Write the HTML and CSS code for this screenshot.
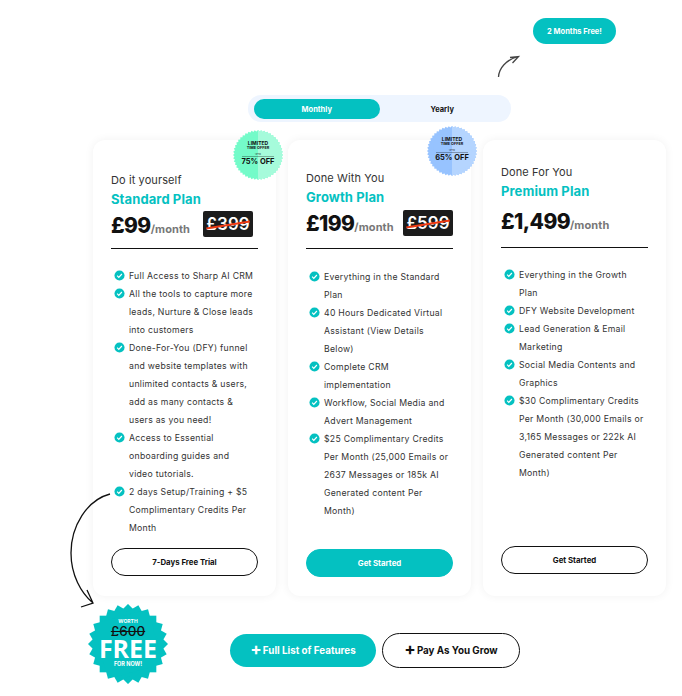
FILE: index.html
```html
<!DOCTYPE html>
<html lang="en">
<head>
    <meta charset="UTF-8">
    <meta name="viewport" content="width=device-width, initial-scale=1.0">
    <title>Pricing Plans</title>
    <link rel="stylesheet" href="styles.css">
</head>
<body>
    <!-- shared shapes -->
    <svg class="defs" width="0" height="0" aria-hidden="true">
        <defs>
            <symbol id="burstFine" viewBox="-50 -50 100 100">
                <rect x="-35.4" y="-35.4" width="70.8" height="70.8"/>
                <rect x="-35.4" y="-35.4" width="70.8" height="70.8" transform="rotate(7.5)"/>
                <rect x="-35.4" y="-35.4" width="70.8" height="70.8" transform="rotate(15)"/>
                <rect x="-35.4" y="-35.4" width="70.8" height="70.8" transform="rotate(22.5)"/>
                <rect x="-35.4" y="-35.4" width="70.8" height="70.8" transform="rotate(30)"/>
                <rect x="-35.4" y="-35.4" width="70.8" height="70.8" transform="rotate(37.5)"/>
                <rect x="-35.4" y="-35.4" width="70.8" height="70.8" transform="rotate(45)"/>
                <rect x="-35.4" y="-35.4" width="70.8" height="70.8" transform="rotate(52.5)"/>
                <rect x="-35.4" y="-35.4" width="70.8" height="70.8" transform="rotate(60)"/>
                <rect x="-35.4" y="-35.4" width="70.8" height="70.8" transform="rotate(67.5)"/>
                <rect x="-35.4" y="-35.4" width="70.8" height="70.8" transform="rotate(75)"/>
                <rect x="-35.4" y="-35.4" width="70.8" height="70.8" transform="rotate(82.5)"/>
            </symbol>
            <symbol id="burstWide" viewBox="-50 -50 100 100">
                <rect x="-35.4" y="-35.4" width="70.8" height="70.8"/>
                <rect x="-35.4" y="-35.4" width="70.8" height="70.8" transform="rotate(15)"/>
                <rect x="-35.4" y="-35.4" width="70.8" height="70.8" transform="rotate(30)"/>
                <rect x="-35.4" y="-35.4" width="70.8" height="70.8" transform="rotate(45)"/>
                <rect x="-35.4" y="-35.4" width="70.8" height="70.8" transform="rotate(60)"/>
                <rect x="-35.4" y="-35.4" width="70.8" height="70.8" transform="rotate(75)"/>
            </symbol>
            <symbol id="check" viewBox="0 0 12 12">
                <circle cx="6" cy="6" r="5.5" fill="#04c1c1"/>
                <path d="M3.4 6.2l1.8 1.8 3.4-3.6" fill="none" stroke="#fff" stroke-width="1.3"/>
            </symbol>
            <clipPath id="rightHalf">
                <rect x="50" y="0" width="50" height="100"/>
            </clipPath>
        </defs>
    </svg>

    <div class="page">
        <div class="promo-row">
            <span class="promo-pill">2 Months Free!</span>
        </div>

        <div class="toggle">
            <button class="toggle-btn toggle-active" type="button">Monthly</button>
            <button class="toggle-btn" type="button">Yearly</button>
        </div>

        <div class="plans">
            <!-- Standard -->
            <section class="plan plan-standard">
                <p class="plan-kicker">Do it yourself</p>
                <h2 class="plan-name">Standard Plan</h2>
                <div class="plan-price">
                    <span class="amount">£99</span><span class="per">/month</span>
                    <span class="old-price">£399</span>
                </div>
                <ul class="features">
                    <li><svg class="tick"><use href="#check"/></svg>Full Access to Sharp AI CRM</li>
                    <li><svg class="tick"><use href="#check"/></svg>All the tools to capture more leads, Nurture &amp; Close leads into customers</li>
                    <li><svg class="tick"><use href="#check"/></svg>Done-For-You (DFY) funnel and website templates with unlimited contacts &amp; users, add as many contacts &amp; users as you need!</li>
                    <li><svg class="tick"><use href="#check"/></svg>Access to Essential onboarding guides and<br>video tutorials.</li>
                    <li><svg class="tick"><use href="#check"/></svg>2 days Setup/Training + $5 Complimentary Credits Per Month</li>
                </ul>
                <a class="plan-btn" href="#">7-Days Free Trial</a>
            </section>

            <!-- Growth -->
            <section class="plan plan-growth">
                <p class="plan-kicker">Done With You</p>
                <h2 class="plan-name">Growth Plan</h2>
                <div class="plan-price">
                    <span class="amount">£199</span><span class="per">/month</span>
                    <span class="old-price">£599</span>
                </div>
                <ul class="features">
                    <li><svg class="tick"><use href="#check"/></svg>Everything in the Standard Plan</li>
                    <li><svg class="tick"><use href="#check"/></svg>40 Hours Dedicated Virtual Assistant (View Details Below)</li>
                    <li><svg class="tick"><use href="#check"/></svg>Complete CRM implementation</li>
                    <li><svg class="tick"><use href="#check"/></svg>Workflow, Social Media and Advert Management</li>
                    <li><svg class="tick"><use href="#check"/></svg>$25 Complimentary Credits Per Month (25,000 Emails or 2637 Messages or 185k AI Generated content Per Month)</li>
                </ul>
                <a class="plan-btn plan-btn-solid" href="#">Get Started</a>
            </section>

            <!-- Premium -->
            <section class="plan plan-premium">
                <p class="plan-kicker">Done For You</p>
                <h2 class="plan-name">Premium Plan</h2>
                <div class="plan-price">
                    <span class="amount">£1,499</span><span class="per">/month</span>
                </div>
                <ul class="features">
                    <li><svg class="tick"><use href="#check"/></svg>Everything in the Growth Plan</li>
                    <li><svg class="tick"><use href="#check"/></svg>DFY Website Development</li>
                    <li><svg class="tick"><use href="#check"/></svg>Lead Generation &amp; Email Marketing</li>
                    <li><svg class="tick"><use href="#check"/></svg>Social Media Contents and Graphics</li>
                    <li><svg class="tick"><use href="#check"/></svg>$30 Complimentary Credits Per Month (30,000 Emails or 3,165 Messages or 222k AI Generated content Per Month)</li>
                </ul>
                <a class="plan-btn" href="#">Get Started</a>
            </section>
        </div>

        <div class="actions">
            <a class="action-btn action-solid" href="#"><span class="plus">+</span>Full List of Features</a>
            <a class="action-btn action-outline" href="#"><span class="plus">+</span>Pay As You Grow</a>
        </div>

        <!-- overlays -->
        <svg class="arrow-up" viewBox="0 0 24 24" width="24" height="24">
            <path d="M1.500 23C2 14 9 6 21 2.500M13 3.500L21.500 2.500L15.500 9" fill="none" stroke="#444" stroke-width="1.300"/>
        </svg>

        <svg class="arrow-down" viewBox="0 0 48 120" width="48" height="120">
            <path d="M41 3C18 9 2 35 2 62C2 84 12 102 24 112M18 99L24 112L12 116" fill="none" stroke="#111" stroke-width="1.300"/>
        </svg>

        <div class="burst burst-green">
            <svg viewBox="0 0 100 100"><use href="#burstFine" width="100" height="100" class="tone-dark"/><g clip-path="url(#rightHalf)"><use href="#burstFine" width="100" height="100" class="tone-light"/></g></svg>
            <div class="burst-text">
                <span class="burst-top">LIMITED</span>
                <span class="burst-sub">TIME OFFER</span>
                <span class="burst-upto">UPTO</span>
                <span class="burst-off">75% OFF</span>
            </div>
        </div>

        <div class="burst burst-blue">
            <svg viewBox="0 0 100 100"><use href="#burstFine" width="100" height="100" class="tone-dark"/><g clip-path="url(#rightHalf)"><use href="#burstFine" width="100" height="100" class="tone-light"/></g></svg>
            <div class="burst-text">
                <span class="burst-top">LIMITED</span>
                <span class="burst-sub">TIME OFFER</span>
                <span class="burst-upto">UPTO</span>
                <span class="burst-off">65% OFF</span>
            </div>
        </div>

        <div class="free-badge">
            <svg viewBox="0 0 100 100"><use href="#burstWide" width="100" height="100"/></svg>
            <div class="free-text">
                <span class="free-worth">WORTH</span>
                <span class="free-old">£600</span>
                <span class="free-main">FREE</span>
                <span class="free-now">FOR NOW!</span>
            </div>
        </div>
    </div>
</body>
</html>
```

FILE: styles.css
```css
* {
    box-sizing: border-box;
}

body {
    font-family: "Inter", "Liberation Sans", sans-serif;
    background-color: #fff;
    color: #111;
    margin: 0;
}

a {
    text-decoration: none;
}

.defs {
    position: absolute;
}

.page {
    position: relative;
    width: 682px;
    height: 696px;
    overflow: hidden;
    padding-top: 18px;
}

/* promo + toggle */
.promo-row {
    display: flex;
    justify-content: flex-end;
    padding-right: 66px;
}

.promo-pill {
    display: flex;
    align-items: center;
    justify-content: center;
    width: 83px;
    height: 26px;
    border-radius: 13px;
    background-color: #04c1c1;
    color: #fff;
    font-size: 7.5px;
    font-weight: 700;
}

.toggle {
    display: flex;
    width: 263px;
    height: 27px;
    margin: 51px 0 0 248px;
    padding: 4px 6px;
    border-radius: 13px;
    background-color: #eef5ff;
}

.toggle-btn {
    width: 126px;
    height: 20px;
    padding: 0;
    border: none;
    border-radius: 10px;
    background: none;
    color: #111;
    font-family: inherit;
    font-size: 7.5px;
    font-weight: 700;
}

.toggle-active {
    background-color: #04c1c1;
    color: #fff;
}

/* plan cards */
.plans {
    display: flex;
    gap: 12px;
    height: 456px;
    margin: 18px 0 0 93px;
}

.plan {
    display: flex;
    flex-direction: column;
    width: 183px;
    padding: 0 18px;
    border-radius: 12px;
    background-color: #fff;
    box-shadow: 0 0 10px rgba(0, 0, 0, 0.06);
}

.plan-standard {
    padding-top: 33px;
    padding-bottom: 20px;
}

.plan-growth {
    padding-top: 31px;
    padding-bottom: 19px;
}

.plan-premium {
    padding-top: 25px;
    padding-bottom: 22px;
}

.plan-kicker {
    margin: 0;
    font-size: 11px;
    line-height: 14px;
    letter-spacing: 0.1px;
    color: #333;
}

.plan-name {
    margin: 5px 0 0;
    font-size: 13px;
    line-height: 14px;
    letter-spacing: 0.1px;
    font-weight: 700;
    color: #04c1c1;
}

.plan-price {
    display: flex;
    align-items: flex-end;
    height: 43px;
    padding-bottom: 10px;
    border-bottom: 1px solid #111;
}

.plan-growth .plan-price {
    height: 45px;
    padding-bottom: 12px;
}

.plan-premium .plan-price {
    height: 50px;
    padding-bottom: 13px;
}

.amount {
    font-size: 21px;
    line-height: 24px;
    letter-spacing: -0.6px;
    font-weight: 800;
    color: #111;
}

.per {
    font-size: 11px;
    line-height: 18px;
    letter-spacing: 0.1px;
    font-weight: 700;
    color: #777;
}

.old-price {
    position: relative;
    display: block;
    width: 50px;
    height: 26px;
    margin: 0 5px 1px auto;
    border-radius: 2px;
    background-color: #1c1c1c;
    color: #fff;
    font-size: 17px;
    line-height: 26px;
    font-weight: 600;
    text-align: center;
}

.plan-growth .old-price {
    margin-right: 0;
    margin-bottom: 0;
}

.old-price::after {
    content: "";
    position: absolute;
    left: 3px;
    right: 3px;
    top: 13px;
    height: 1.5px;
    background-color: #f03a12;
    transform: rotate(-9deg);
}

.features {
    flex: 1;
    margin: 18px 0 0;
    padding: 0;
    list-style: none;
    font-size: 8.7px;
    line-height: 18px;
    letter-spacing: 0.27px;
    color: #333;
}

.plan-growth .features {
    margin-top: 19px;
}

.features li {
    position: relative;
    padding-left: 18px;
}

.tick {
    position: absolute;
    left: 3px;
    top: 3px;
    width: 11px;
    height: 11px;
}

.plan-btn {
    display: flex;
    align-items: center;
    justify-content: center;
    height: 28px;
    border: 1px solid #111;
    border-radius: 14px;
    color: #111;
    font-size: 7.8px;
    font-weight: 700;
}

.plan-btn-solid {
    border-color: #04c1c1;
    background-color: #04c1c1;
    color: #fff;
}

/* bottom buttons */
.actions {
    display: flex;
    align-items: center;
    gap: 6px;
    margin: 37px 0 0 230px;
}

.action-btn {
    display: flex;
    align-items: center;
    justify-content: center;
    border-radius: 18px;
    font-size: 9.8px;
    font-weight: 700;
}

.plus {
    margin: 0 1px 3px 0;
    font-size: 17px;
    line-height: 14px;
}

.action-solid {
    width: 146px;
    height: 33px;
    background-color: #04c1c1;
    color: #fff;
}

.action-outline {
    width: 138px;
    height: 35px;
    border: 1px solid #111;
    color: #111;
}

/* things lying over the cards */
.arrow-up {
    position: absolute;
    left: 497px;
    top: 54px;
}

.arrow-down {
    position: absolute;
    left: 69px;
    top: 491px;
}

.burst {
    position: absolute;
    width: 50px;
    height: 50px;
}

.burst svg {
    display: block;
    width: 100%;
    height: 100%;
}

.burst-green {
    left: 233px;
    top: 130px;
}

.burst-blue {
    left: 427px;
    top: 126px;
}

.burst-green .tone-dark {
    fill: #74fbc9;
}

.burst-green .tone-light {
    fill: #a6fbdb;
}

.burst-blue .tone-dark {
    fill: #97c3ff;
}

.burst-blue .tone-light {
    fill: #b5d5ff;
}

.burst-text {
    position: absolute;
    inset: 0;
    display: flex;
    flex-direction: column;
    align-items: center;
    justify-content: center;
    padding-bottom: 2px;
    color: #111;
    font-weight: 700;
    text-align: center;
}

.burst-top {
    font-size: 5px;
    line-height: 5px;
}

.burst-sub {
    font-size: 3.8px;
    line-height: 4px;
}

.burst-upto {
    width: 32px;
    margin-top: 3px;
    border-bottom: 1px solid rgba(0, 0, 0, 0.3);
    font-size: 2.2px;
    line-height: 3px;
    font-weight: 400;
}

.burst-off {
    font-size: 7.5px;
    line-height: 10px;
}

.free-badge {
    position: absolute;
    left: 88px;
    top: 604px;
    width: 80px;
    height: 80px;
    fill: #04c1c1;
}

.free-badge svg {
    display: block;
    width: 100%;
    height: 100%;
}

.free-text {
    position: absolute;
    inset: 0;
    display: flex;
    flex-direction: column;
    align-items: center;
    justify-content: center;
    padding-bottom: 3px;
    color: #fff;
    font-weight: 700;
    text-align: center;
}

.free-worth {
    font-size: 5px;
    line-height: 7px;
}

.free-old {
    color: #111;
    font-size: 13.5px;
    line-height: 12px;
    font-weight: 500;
    text-decoration: line-through;
}

.free-main {
    margin-top: 1px;
    font-family: "Open Sans", sans-serif;
    font-size: 25px;
    line-height: 20px;
}

.free-now {
    margin-top: 2px;
    font-size: 5.5px;
    line-height: 8px;
}
```
